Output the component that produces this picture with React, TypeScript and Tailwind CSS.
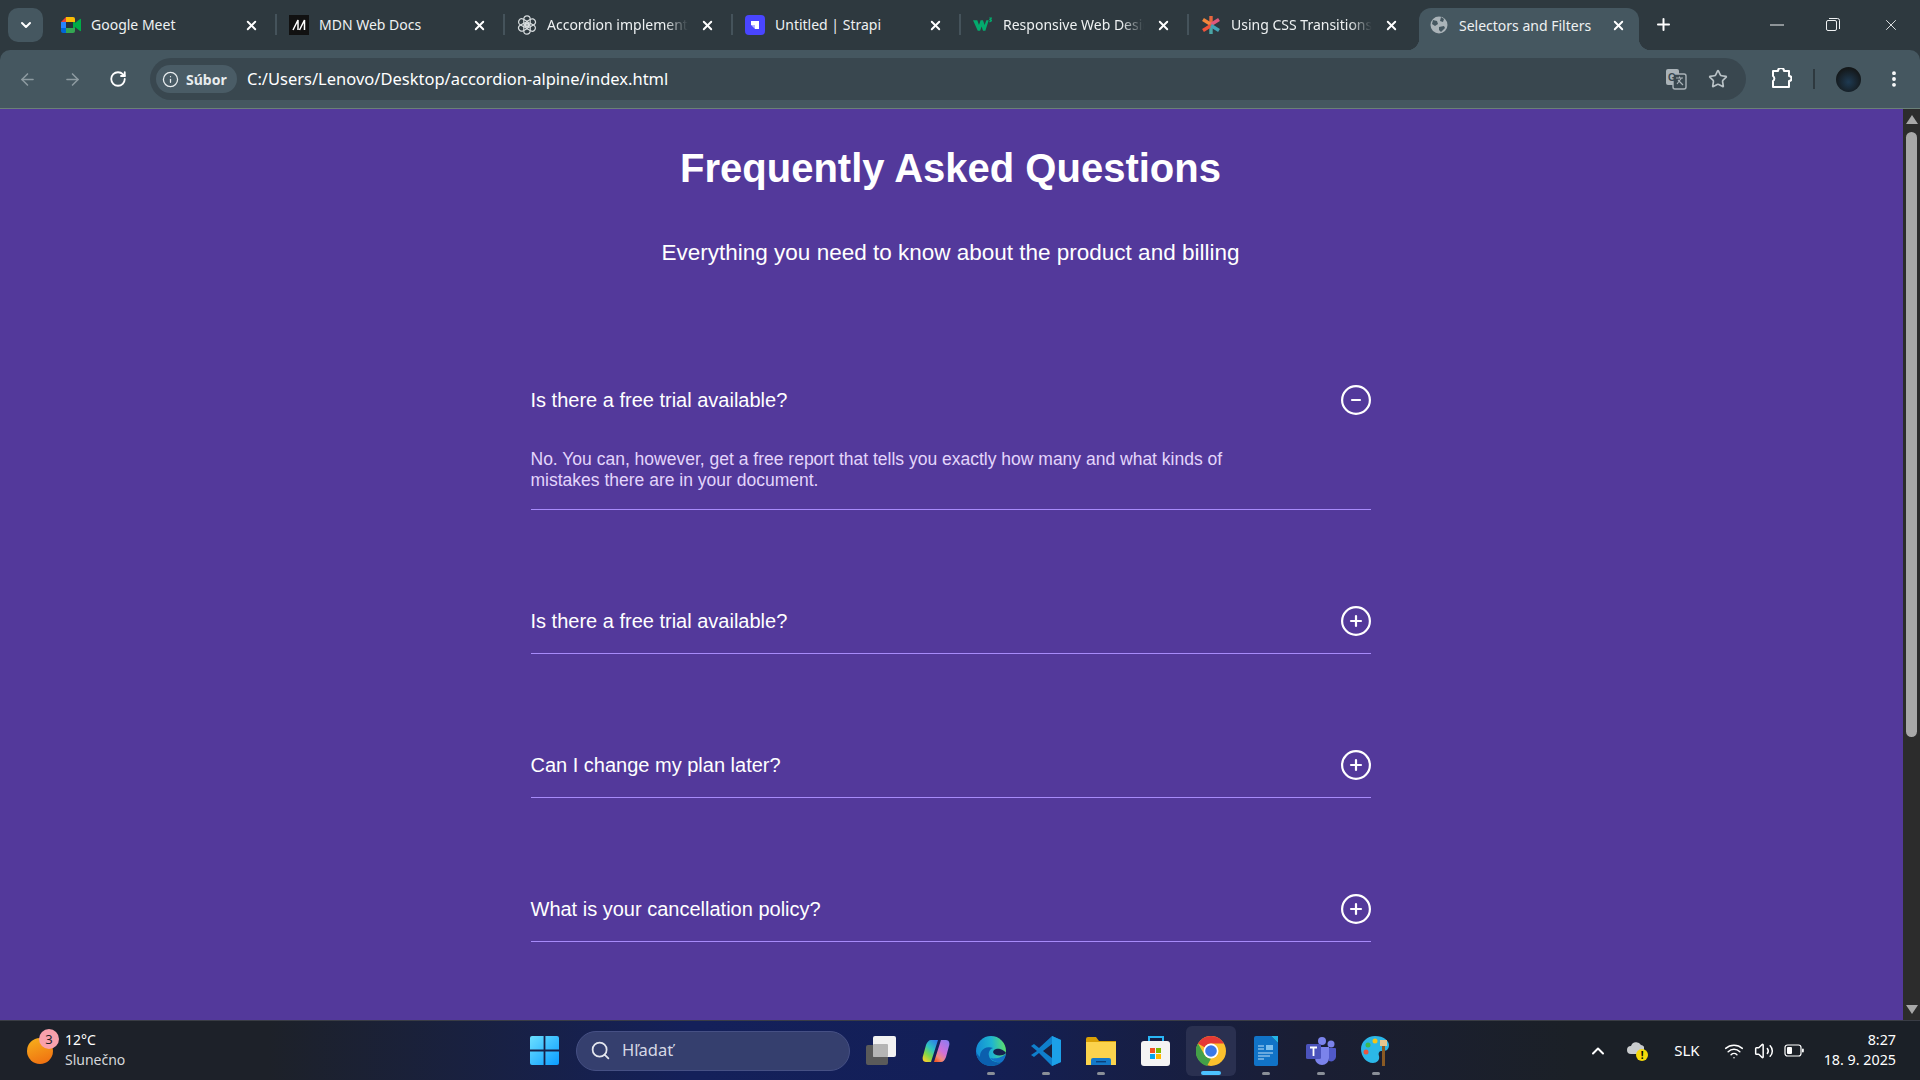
import { useState } from "react";
import { ArrowLeft, ArrowRight, ChevronDown, ChevronUp, Info, MoreVertical, Plus, RotateCw, Search, Star, Volume2, Wifi, X } from "lucide-react";

const ui = "font-['Noto_Sans','Open_Sans',sans-serif]";

function MeetIcon() {
    return (
        <svg width="20" height="20" viewBox="0 0 20 20">
            <path d="M5 2h7a2 2 0 012 2v3H5z" fill="#fbbc04" />
            <path d="M5 2v5H0z" fill="#ea4335" />
            <path d="M0 7h5v6H0z" fill="#2684fc" />
            <path d="M0 13h5v5H2a2 2 0 01-2-2z" fill="#0066da" />
            <path d="M5 13h9v3a2 2 0 01-2 2H5z" fill="#34a853" />
            <path d="M12 7v6H5V7z" fill="#263238" />
            <path d="M12 7h2v6h-2zM14 8l5-4a.6.6 0 011 .5v11a.6.6 0 01-1 .5l-5-4z" fill="#00ac47" />
        </svg>
    );
}

function MdnIcon() {
    return (
        <div className="w-5 h-5 bg-[#111] flex items-center justify-center">
            <svg width="20" height="20" viewBox="0 0 20 20" fill="none" stroke="#fff" strokeWidth="1.5">
                <path d="M4 15L9 5v10M10.500 15L15.500 5v10" />
            </svg>
        </div>
    );
}

function GptIcon() {
    return (
        <svg width="20" height="20" viewBox="0 0 20 20" fill="none" stroke="#d7dcde" strokeWidth="1.2">
            {[0, 60, 120, 180, 240, 300].map(a => (
                <rect key={a} x="6.800" y="0.800" width="6.400" height="10.500" rx="3.200" transform={`rotate(${a} 10 10)`} />
            ))}
        </svg>
    );
}

function StrapiIcon() {
    return (
        <svg width="20" height="20" viewBox="0 0 20 20">
            <rect width="20" height="20" rx="4" fill="#4945ff" />
            <path d="M6 6h8v8h-4v-4H6z" fill="#fff" />
            <path d="M6 10h4v4z" fill="#b8b6ff" />
        </svg>
    );
}

function W3Icon() {
    return (
        <svg width="21" height="20" viewBox="0 0 21 20">
            <path d="M0 5h4.500l1.800 5L8 5h2.500l1.700 5L14 5h2.500L13 16h-2.500L9 11.500 7.500 16H5z" fill="#04aa6d" />
            <path d="M17 2h3v1l-1 1q1 .5 1 1.500T18 7h-1V6h1V5h-1V4l1-1h-1z" fill="#04aa6d" />
        </svg>
    );
}

function StarBurstIcon() {
    return (
        <svg width="20" height="20" viewBox="0 0 20 20" strokeWidth="3.400" strokeLinecap="butt">
            <path d="M10 1v8" stroke="#e8663d" />
            <path d="M10 11v8" stroke="#4aa5a5" />
            <path d="M2 4.500l8 5" stroke="#f4873c" />
            <path d="M18 4.500l-8 5" stroke="#e0587c" />
            <path d="M2 15.500l8-5" stroke="#f0533a" />
            <path d="M18 15.500l-8-5" stroke="#44a3b5" />
        </svg>
    );
}

function GlobeIcon() {
    return (
        <svg width="18" height="18" viewBox="0 0 18 18">
            <circle cx="9" cy="9" r="8.500" fill="#aab3b8" />
            <path d="M3 4l4 1 1 3-3 2-3-2zM11 1l3 2-1 3-3-1zM9 11l5-1 1 2-4 4-2-2z" fill="#455760" />
        </svg>
    );
}

function TranslateIcon() {
    return (
        <svg width="22" height="22" viewBox="0 0 22 22">
            <rect x="1" y="1" width="13" height="16" rx="2" fill="#aab3b8" />
            <rect x="8" y="6" width="13" height="15" rx="2" fill="#39474f" stroke="#aab3b8" strokeWidth="1.400" />
            <text x="3" y="13" fontSize="10" fontWeight="700" fill="#39474f" fontFamily="Liberation Sans">G</text>
            <path d="M11 10h7M14.500 8.500V10M12 16l4.500-6M13 12l5 5" stroke="#aab3b8" strokeWidth="1.100" fill="none" />
        </svg>
    );
}

function ExtensionIcon() {
    return (
        <svg width="22" height="22" viewBox="0 0 22 22" fill="none" stroke="#fff" strokeWidth="2" strokeLinejoin="round">
            <path d="M3 4h5a3 3 0 016 0h5v5a2.500 2.500 0 010 5v6H3v-6a3 3 0 000-5z" transform="translate(0 -1)" />
        </svg>
    );
}

function WindowsLogo() {
    return (
        <svg width="29" height="29" viewBox="0 0 29 29">
            <defs>
                <linearGradient id="win" x1="0" y1="0" x2="1" y2="1">
                    <stop offset="0" stopColor="#6ce0ff" />
                    <stop offset="1" stopColor="#0a9cff" />
                </linearGradient>
            </defs>
            <path d="M0 2a2 2 0 012-2h11.600v13.600H0zM15.400 0H27a2 2 0 012 2v11.600H15.400zM0 15.400h13.600V29H2a2 2 0 01-2-2zM15.400 15.400H29V27a2 2 0 01-2 2H15.400z" fill="url(#win)" />
        </svg>
    );
}

function TaskViewIcon() {
    return (
        <div className="relative w-[30px] h-[29px]">
            <div className="absolute left-0 bottom-0 w-[22px] h-[20px] rounded-[2px] bg-[#5a5a5a]" />
            <div className="absolute right-0 top-0 w-[23px] h-[21px] rounded-[2px] bg-[#f2f2f2]" />
            <div className="absolute left-[7px] top-[8px] w-[15px] h-[13px] rounded-[1px] bg-[#b5b5b5]" />
        </div>
    );
}

function CopilotIcon() {
    return (
        <svg width="28" height="28" viewBox="0 0 28 28">
            <defs>
                <linearGradient id="copA" x1="0.800" y1="0" x2="0.200" y2="1">
                    <stop offset="0" stopColor="#2f7fe8" />
                    <stop offset="0.4" stopColor="#2fc4c0" />
                    <stop offset="0.7" stopColor="#7fd84a" />
                    <stop offset="1" stopColor="#f7d02c" />
                </linearGradient>
                <linearGradient id="copB" x1="0.800" y1="0" x2="0.200" y2="1">
                    <stop offset="0" stopColor="#8f7cf0" />
                    <stop offset="0.5" stopColor="#d070d8" />
                    <stop offset="0.8" stopColor="#f08a7d" />
                    <stop offset="1" stopColor="#f25c2c" />
                </linearGradient>
            </defs>
            <path d="M9 3h7L9 25H4c-3 0-4-3-3-6L4 8c1-3 3-5 5-5z" fill="url(#copA)" />
            <path d="M19 25h-7l7-22h5c3 0 4 3 3 6l-3 11c-1 3-3 5-5 5z" fill="url(#copB)" />
        </svg>
    );
}

function EdgeIcon() {
    return (
        <svg width="30" height="30" viewBox="0 0 30 30">
            <defs>
                <linearGradient id="edgeA" x1="0" y1="0.500" x2="1" y2="0.400">
                    <stop offset="0" stopColor="#1289d6" />
                    <stop offset="0.55" stopColor="#1fb5d0" />
                    <stop offset="1" stopColor="#5ee06a" />
                </linearGradient>
            </defs>
            <circle cx="15" cy="15" r="15" fill="url(#edgeA)" />
            <path d="M0 15c0 9 7 15 15 15 4 0 8-1 11-4-6 1-12-1-13-6-1-4 1-7 4-8-5-2-10 0-12 4-1 2-1 3-1 5-2-2-4-4-4-6z" fill="#0b5fae" />
            <path d="M30 17c-3 3-8 3-11 1.500-2-1-2.500-3-1-4.500 1.500-1 4-1.500 6-1 3 .5 5 2.500 6 4z" fill="#16214e" />
            <path d="M30 17.500c-.5 4-2 6.500-4 8.500-5 .8-9.500-1-12-4 3 .8 10 1 16-4.500z" fill="#1273c8" />
        </svg>
    );
}

function VsCodeIcon() {
    return (
        <svg width="30" height="30" viewBox="0 0 30 30">
            <path d="M21 0l9 4v22l-9 4L8 17l-5 4-3-2 6-4-6-5 3-2 5 4z" fill="#0f7fcc" />
            <path d="M21 0l9 4v22l-9 4z" fill="#1ca0e8" />
            <path d="M21 8v14l-9-7z" fill="#1a2040" />
        </svg>
    );
}

function ExplorerIcon() {
    return (
        <svg width="30" height="28" viewBox="0 0 30 28">
            <path d="M0 2a2 2 0 012-2h8l3 4h17v6H0z" fill="#d9a006" />
            <rect y="5" width="30" height="23" fill="#fbd34d" />
            <path d="M5 28v-5a2 2 0 012-2h16a2 2 0 012 2v5z" fill="#1579c8" />
            <rect x="10" y="24" width="10" height="1.400" fill="#0c3f78" />
        </svg>
    );
}

function StoreIcon() {
    return (
        <svg width="30" height="30" viewBox="0 0 30 30">
            <path d="M8 6V1h14v5" fill="none" stroke="#29b6f6" strokeWidth="2" />
            <rect y="5" width="29" height="25" rx="3" fill="#f4f4f4" />
            <rect x="9" y="12" width="5" height="5" fill="#f25022" />
            <rect x="15" y="12" width="5" height="5" fill="#7fba00" />
            <rect x="9" y="18" width="5" height="5" fill="#00a4ef" />
            <rect x="15" y="18" width="5" height="5" fill="#ffb900" />
        </svg>
    );
}

function ChromeIcon() {
    return (
        <svg width="30" height="30" viewBox="0 0 30 30">
            <circle cx="15" cy="15" r="15" fill="#fbc02d" />
            <path d="M15 0a15 15 0 0113 7.500H15a7.500 7.500 0 00-6.500 3.800L2 7.500A15 15 0 0115 0z" fill="#e53935" />
            <path d="M2 7.500l6.500 11.300A7.500 7.500 0 0015 22.500L11 30A15 15 0 012 7.500z" fill="#43a047" />
            <circle cx="15" cy="15" r="7.500" fill="#fff" />
            <circle cx="15" cy="15" r="5.800" fill="#3b78e7" />
        </svg>
    );
}

function WriterIcon() {
    return (
        <svg width="24" height="30" viewBox="0 0 24 30">
            <path d="M2 0h15l7 7v21a2 2 0 01-2 2H2a2 2 0 01-2-2V2a2 2 0 012-2z" fill="#1173c7" />
            <path d="M17 0l7 7V0z" fill="#25b5e8" />
            <path d="M4 10h6M4 13h6M4 17h15M4 20h12M4 23h6" stroke="#bfe0f7" strokeWidth="1.200" />
            <rect x="12" y="9" width="7" height="5" fill="#7fc0ee" />
        </svg>
    );
}

function TeamsIcon() {
    return (
        <svg width="30" height="28" viewBox="0 0 30 28">
            <circle cx="25" cy="7" r="3.500" fill="#7b83eb" />
            <circle cx="16" cy="4" r="4" fill="#7b83eb" />
            <path d="M20 11h9a1 1 0 011 1v8a5 5 0 01-7 4z" fill="#5059c9" />
            <path d="M9 10h14v11a7 7 0 01-14 0z" fill="#7b83eb" />
            <rect y="7" width="15" height="15" rx="1.500" fill="#4b53bc" />
            <path d="M4 10.500h7M7.500 10.500V19" stroke="#fff" strokeWidth="1.800" />
        </svg>
    );
}

function PaintIcon() {
    return (
        <svg width="30" height="30" viewBox="0 0 30 30">
            <path d="M14 0c9 0 14 5 14 9 0 5-3 6-7 6-3 0-4 2-3 5 1 4-2 7-6 7C5 27 0 20 0 13 0 6 6 0 14 0z" fill="#2bb7e8" />
            <circle cx="7" cy="9" r="2.500" fill="#3fb950" />
            <circle cx="14" cy="5" r="2.500" fill="#f5c518" />
            <circle cx="5" cy="16" r="2.500" fill="#e8553f" />
            <rect x="21" y="9" width="3" height="21" fill="#8a5a24" />
            <path d="M19 4h7v6h-7z" fill="#e6c68f" />
        </svg>
    );
}

function CloudAlertIcon() {
    return (
        <div className="relative w-[21px] h-[20px]">
            <svg width="17" height="12" viewBox="0 0 17 12" className="absolute top-[1px] left-0">
                <path d="M4 12a4 4 0 010-8 5.500 5.500 0 0110-1 4.500 4.500 0 01-1 9z" fill="#c9ccce" />
            </svg>
            <div className="absolute right-0 bottom-0 w-[12px] h-[12px] rounded-full bg-[#f5d90a] text-black text-[10px] leading-[12px] text-center font-bold">!</div>
        </div>
    );
}

function BatteryIcon() {
    return (
        <svg width="20" height="13" viewBox="0 0 20 13" fill="none">
            <rect x="1" y="1" width="16" height="11" rx="2.500" stroke="#fff" strokeWidth="1.200" />
            <rect x="3" y="3" width="5" height="7" rx="1" fill="#fff" />
            <rect x="18" y="4.500" width="1.800" height="4" rx="0.900" fill="#fff" />
        </svg>
    );
}

function CircleToggle({ open }: { open: boolean }) {
    return (
        <svg width="30" height="30" viewBox="0 0 30 30" fill="none" stroke="#fff" strokeWidth="2.200" strokeLinecap="round">
            <circle cx="15" cy="15" r="13.900" />
            <path d={open ? "M11 15h8" : "M10 15h10"} />
            {!open && <path d="M15 10v10" />}
        </svg>
    );
}

const tabs = [
    { title: "Google Meet", icon: <MeetIcon />, fade: false },
    { title: "MDN Web Docs", icon: <MdnIcon />, fade: false },
    { title: "Accordion implementation", icon: <GptIcon />, fade: true },
    { title: "Untitled | Strapi", icon: <StrapiIcon />, fade: false },
    { title: "Responsive Web Design", icon: <W3Icon />, fade: true },
    { title: "Using CSS Transitions", icon: <StarBurstIcon />, fade: true },
];

const faqs = [
    { q: "Is there a free trial available?", a: "No. You can, however, get a free report that tells you exactly how many and what kinds of mistakes there are in your document." },
    { q: "Is there a free trial available?", a: "Yes. You can try the product for free for 30 days." },
    { q: "Can I change my plan later?", a: "Of course. You can change your plan at any time." },
    { q: "What is your cancellation policy?", a: "You can cancel at any time from your account settings." },
];

function TabStrip() {
    return (
        <div className={`h-[50px] shrink-0 flex items-start pl-2 pt-2 text-[14px] text-[#eef1f2] ${ui}`}>
            <button className="w-[35px] h-[34px] rounded-[10px] bg-[#455760] flex items-center justify-center text-white">
                <ChevronDown size={16} strokeWidth={3} />
            </button>
            <div className="ml-[6px] flex">
                {tabs.map((tab, i) => (
                    <div key={i} className="relative w-[228px] h-[34px] flex items-center pl-[12px]">
                        <span className="w-5 h-5 shrink-0 flex items-center justify-center">{tab.icon}</span>
                        <span className={`ml-[10px] w-[141px] whitespace-nowrap overflow-hidden leading-[34px] ${tab.fade ? "[mask-image:linear-gradient(to_right,#000_84%,transparent)]" : ""}`}>{tab.title}</span>
                        <X size={15} strokeWidth={3} className="ml-[12px] text-white" />
                        {i < tabs.length - 1 && <div className="absolute right-0 top-[6px] w-[2px] h-[21px] bg-[#45535b]" />}
                    </div>
                ))}
            </div>
            <div className="relative ml-[2px] w-[220px] h-[42px] rounded-t-[12px] bg-[#455760] flex items-center pl-[11px] pb-2">
                <span className="absolute left-[-12px] bottom-0 w-3 h-3 bg-[radial-gradient(circle_at_0_0,transparent_12px,#455760_12.5px)]" />
                <span className="absolute right-[-12px] bottom-0 w-3 h-3 bg-[radial-gradient(circle_at_100%_0,transparent_12px,#455760_12.5px)]" />
                <GlobeIcon />
                <span className="ml-[11px] w-[152px] whitespace-nowrap">Selectors and Filters</span>
                <X size={15} strokeWidth={3} className="text-white" />
            </div>
            <Plus size={19} strokeWidth={2.5} className="ml-[15px] mt-[7px] text-white" />
            <div className="ml-auto flex items-center h-[34px] text-[#eef1f2]">
                <svg width="14" height="14" viewBox="0 0 14 14" className="mr-[42px]"><path d="M0 7h14" stroke="currentColor" /></svg>
                <svg width="14" height="14" viewBox="0 0 14 14" fill="none" stroke="currentColor" className="mr-[42px]">
                    <rect x="0.500" y="2.500" width="10" height="10" rx="1.500" />
                    <path d="M3 .5h8.500a2 2 0 012 2V11" />
                </svg>
                <X size={18} strokeWidth={1.2} className="mr-[20px]" />
            </div>
        </div>
    );
}

function Toolbar() {
    return (
        <div className={`h-[59px] shrink-0 rounded-t-[10px] bg-[#455760] border-b border-[#6b8078] flex items-center pl-[18px] pr-[11px] ${ui}`}>
            <ArrowLeft size={19} strokeWidth={2} className="text-[#8d9aa0]" />
            <ArrowRight size={19} strokeWidth={2} className="ml-[26px] text-[#8d9aa0]" />
            <RotateCw size={18} strokeWidth={2.4} className="ml-[27px] text-white" />
            <div className="ml-[23px] w-[1596px] h-[42px] rounded-full bg-[#39474f] flex items-center pl-[6px] pr-[18px]">
                <div className="h-[28px] w-[81px] rounded-full bg-[#4a5c66] flex items-center pl-[6px] gap-[7px] text-[14px] font-bold text-[#e8ecee]">
                    <Info size={17} strokeWidth={1.8} />
                    <span>Súbor</span>
                </div>
                <span className="ml-[10px] text-[16.5px] text-white">C:/Users/Lenovo/Desktop/accordion-alpine/index.html</span>
                <div className="ml-auto flex items-center gap-[21px] text-[#b9c2c6]">
                    <TranslateIcon />
                    <Star size={20} strokeWidth={2} />
                </div>
            </div>
            <div className="ml-[24px]"><ExtensionIcon /></div>
            <div className="ml-[21px] w-[2px] h-[20px] bg-[#2e393f]" />
            <div className="ml-[21px] w-[25px] h-[25px] rounded-full bg-[radial-gradient(circle_at_50%_60%,#1e3a52,#14181a_70%)]" />
            <MoreVertical size={20} strokeWidth={2.6} className="ml-[23px] text-white" />
        </div>
    );
}

function FaqItem({ q, a, open, onToggle }: { q: string; a: string; open: boolean; onToggle: () => void }) {
    return (
        <div className="border-b border-[#a78bfa] mb-[79px]">
            <button onClick={onToggle} className="w-full h-[64px] flex items-center justify-between text-[20px] text-white cursor-pointer">
                <span>{q}</span>
                <CircleToggle open={open} />
            </button>
            {open && <p className="max-w-[720px] pt-[17px] pb-[18px] text-[17.5px] leading-[21px] text-[#e3d5fb]">{a}</p>}
        </div>
    );
}

function Scrollbar() {
    return (
        <div className="w-[17px] shrink-0 bg-[#2c2c2c] flex flex-col items-center pt-[6px] pb-[6px]">
            <div className="w-0 h-0 border-x-[6px] border-x-transparent border-b-[9px] border-b-[#a8a8a8]" />
            <div className="mt-[8px] w-[11px] h-[605px] rounded-full bg-[#a8a8a8]" />
            <div className="mt-auto w-0 h-0 border-x-[6px] border-x-transparent border-t-[9px] border-t-[#a8a8a8]" />
        </div>
    );
}

function Taskbar() {
    const apps = [
        { icon: <TaskViewIcon />, dot: false },
        { icon: <CopilotIcon />, dot: false },
        { icon: <EdgeIcon />, dot: true },
        { icon: <VsCodeIcon />, dot: true },
        { icon: <ExplorerIcon />, dot: true },
        { icon: <StoreIcon />, dot: false },
        { icon: <ChromeIcon />, dot: false, active: true },
        { icon: <WriterIcon />, dot: true },
        { icon: <TeamsIcon />, dot: true },
        { icon: <PaintIcon />, dot: true },
    ];
    return (
        <div className={`h-[60px] shrink-0 border-t border-[#3a3d45] bg-[linear-gradient(90deg,#1d2129_0%,#1d2129_14%,#14205a_36%,#131f58_50%,#1a1e34_68%,#1b2027_82%)] flex items-center text-white ${ui}`}>
            <div className="w-[530px] shrink-0 flex items-center pl-[27px]">
                <div className="relative w-[26px] h-[26px] rounded-full bg-[linear-gradient(160deg,#f7b21c,#ef6a10)]">
                    <div className="absolute left-[12px] top-[-9px] w-[20px] h-[20px] rounded-full bg-[#f9a1ac] text-[#1d2129] text-[13px] leading-[20px] text-center">3</div>
                </div>
                <div className="ml-[12px] text-[14px] leading-[20px] mt-[-1px]">
                    <div>12°C</div>
                    <div className="text-[#d5d7da]">Slunečno</div>
                </div>
            </div>
            <WindowsLogo />
            <div className="ml-[17px] w-[274px] h-[40px] rounded-full bg-[#353f6e] border border-[#465084] flex items-center pl-[13px] text-[16.5px] text-[#d5d8e4]">
                <Search size={21} strokeWidth={2} className="text-[#e4e6ee]" />
                <span className="ml-[11px]">Hľadať</span>
            </div>
            <div className="ml-[3px] flex">
                {apps.map((app, i) => (
                    <div key={i} className="relative w-[55px] h-[50px] flex items-center justify-center">
                        {app.active && <div className="absolute inset-x-[2.5px] inset-y-0 rounded-[6px] bg-[#2a3050]" />}
                        <div className="relative">{app.icon}</div>
                        {app.dot && <div className="absolute bottom-[1px] left-[23.5px] w-[8px] h-[3px] rounded-full bg-[#8a8f98]" />}
                        {app.active && <div className="absolute bottom-[1px] left-[17.5px] w-[20px] h-[4px] rounded-full bg-[#4cc2ff]" />}
                    </div>
                ))}
            </div>
            <div className="ml-auto flex items-center pr-[24px] text-[14.3px]">
                <ChevronUp size={20} strokeWidth={2.4} />
                <div className="ml-[19px]"><CloudAlertIcon /></div>
                <span className="ml-[26px] text-[15px]">SLK</span>
                <Wifi size={20} strokeWidth={1.8} className="ml-[24px]" />
                <Volume2 size={20} strokeWidth={1.8} className="ml-[10px]" />
                <div className="ml-[10px]"><BatteryIcon /></div>
                <div className="ml-[20px] text-right leading-[20px] mt-[-1px]">
                    <div>8:27</div>
                    <div>18. 9. 2025</div>
                </div>
            </div>
        </div>
    );
}

export default function App() {
    const [openIndex, setOpenIndex] = useState(0);

    return (
        <div className="w-[1920px] h-[1080px] overflow-hidden flex flex-col bg-[#2e393f]">
            <TabStrip />
            <Toolbar />
            <div className="flex-1 min-h-0 flex bg-[#53399b]">
                <main className="flex-1 min-w-0 overflow-hidden pr-[2px] font-['Liberation_Sans',Arial,sans-serif]">
                    <div className="w-[840px] mx-auto">
                        <h1 className="mt-[35px] text-center text-[40px] leading-[48px] font-bold text-white">Frequently Asked Questions</h1>
                        <p className="mt-[45px] text-center text-[22.5px] leading-[32px] text-white">Everything you need to know about the product and billing</p>
                        <div className="mt-[99px]">
                            {faqs.map((item, i) => (
                                <FaqItem
                                    key={i}
                                    q={item.q}
                                    a={item.a}
                                    open={openIndex === i}
                                    onToggle={() => setOpenIndex(openIndex === i ? -1 : i)}
                                />
                            ))}
                        </div>
                    </div>
                </main>
                <Scrollbar />
            </div>
            <Taskbar />
        </div>
    );
}
